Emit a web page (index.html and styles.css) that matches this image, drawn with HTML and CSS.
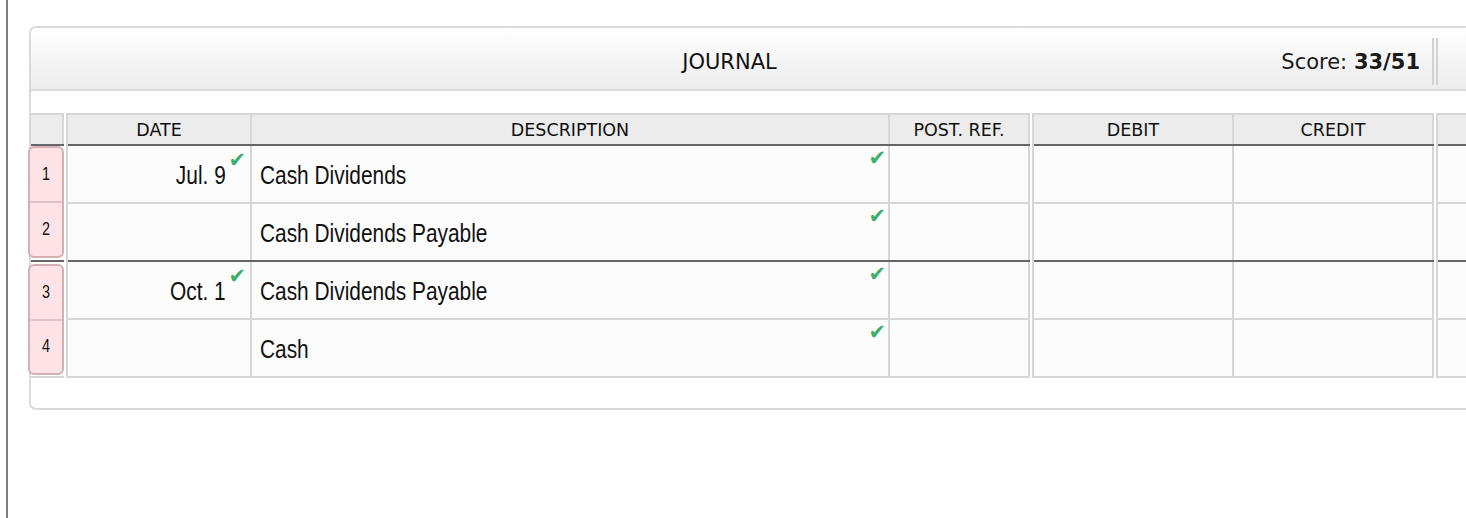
FILE: index.html
```html
<!DOCTYPE html>
<html>
<head>
<meta charset="utf-8">
<link rel="stylesheet" href="styles.css">
</head>
<body>
<div class="frame">
  <div class="panel">
    <div class="panel-head">
      <div class="head-main">
        <span class="title">JOURNAL</span>
        <span class="score">Score: <b>33/51</b></span>
      </div>
      <div class="dbl-sep"></div>
      <div class="head-extra"></div>
    </div>
    <div class="panel-body">
      <div class="grid">
        <div class="grp nums">
          <div class="hrow"><div class="hcell num-h"></div></div>
          <div class="entry dark">
            <div class="pink">
              <div class="pcell"><span class="n">1</span></div>
              <div class="pcell"><span class="n">2</span></div>
            </div>
          </div>
          <div class="entry">
            <div class="pink">
              <div class="pcell"><span class="n">3</span></div>
              <div class="pcell"><span class="n">4</span></div>
            </div>
          </div>
        </div>

        <div class="grp main">
          <div class="hrow">
            <div class="hcell c-date">DATE</div>
            <div class="hcell c-desc">DESCRIPTION</div>
            <div class="hcell c-ref">POST. REF.</div>
          </div>
          <div class="row">
            <div class="cell c-date date"><span class="t tr">Jul. 9</span><span class="chk dchk">✔</span></div>
            <div class="cell c-desc desc"><span class="t">Cash Dividends</span><span class="chk rchk">✔</span></div>
            <div class="cell c-ref"></div>
          </div>
          <div class="row dark">
            <div class="cell c-date date"></div>
            <div class="cell c-desc desc"><span class="t">Cash Dividends Payable</span><span class="chk rchk">✔</span></div>
            <div class="cell c-ref"></div>
          </div>
          <div class="row">
            <div class="cell c-date date"><span class="t tr">Oct. 1</span><span class="chk dchk">✔</span></div>
            <div class="cell c-desc desc"><span class="t">Cash Dividends Payable</span><span class="chk rchk">✔</span></div>
            <div class="cell c-ref"></div>
          </div>
          <div class="row">
            <div class="cell c-date date"></div>
            <div class="cell c-desc desc"><span class="t">Cash</span><span class="chk rchk">✔</span></div>
            <div class="cell c-ref"></div>
          </div>
        </div>

        <div class="grp amt">
          <div class="hrow">
            <div class="hcell c-amt">DEBIT</div>
            <div class="hcell c-amt">CREDIT</div>
          </div>
          <div class="row"><div class="cell c-amt"></div><div class="cell c-amt"></div></div>
          <div class="row dark"><div class="cell c-amt"></div><div class="cell c-amt"></div></div>
          <div class="row"><div class="cell c-amt"></div><div class="cell c-amt"></div></div>
          <div class="row"><div class="cell c-amt"></div><div class="cell c-amt"></div></div>
        </div>

        <div class="grp extra">
          <div class="hrow"><div class="hcell c-extra"></div></div>
          <div class="row"><div class="cell c-extra"></div></div>
          <div class="row dark"><div class="cell c-extra"></div></div>
          <div class="row"><div class="cell c-extra"></div></div>
          <div class="row"><div class="cell c-extra"></div></div>
        </div>
      </div>
    </div>
  </div>
</div>
</body>
</html>
```

FILE: styles.css
```css
* { box-sizing: border-box; }
html, body {
  margin: 0;
  padding: 0;
  background: #fff;
  overflow: hidden;
}
body {
  width: 1466px;
  height: 518px;
  padding-left: 6px;
  font-family: "DejaVu Sans", Verdana, sans-serif;
  color: #111;
}
.frame {
  height: 518px;
  border-left: 2px solid #7d7d7d;
  padding-top: 26px;
  padding-left: 21px;
}
.panel {
  width: 1560px;
  border: 2px solid #dadada;
  border-radius: 7px;
  background: #fff;
}
.panel-head {
  display: flex;
  align-items: center;
  height: 63px;
  border-bottom: 2px solid #dadada;
  border-radius: 5px 5px 0 0;
  background: linear-gradient(#ffffff, #ececec);
}
.head-main {
  width: 1401px;
  display: grid;
  grid-template-columns: 1fr auto 1fr;
  align-items: center;
  padding-right: 12px;
  padding-top: 6px;
}
.title {
  grid-column: 2;
  font-size: 21px;
  color: #111;
  padding-left: 8px;
}
.score {
  grid-column: 3;
  justify-self: end;
  font-size: 21px;
  color: #1a1a1a;
}
.score b { font-weight: bold; }
.dbl-sep {
  width: 6px;
  height: 47px;
  border-left: 2px solid #d2d2d2;
  border-right: 2px solid #d2d2d2;
  margin-top: 6px;
}
.head-extra { flex: 1; }

.panel-body {
  padding: 22px 0 30px 0;
}
.grid {
  display: flex;
  gap: 2px;
  align-items: flex-start;
}
.grp {
  border-top: 2px solid #d6d6d6;
  border-left: 2px solid #d6d6d6;
}
.grp.nums { border-left: 0; width: 33px; }
.hrow {
  display: flex;
  height: 31px;
  border-bottom: 2px solid #666;
}
.hcell {
  background: #ececec;
  border-right: 2px solid #d6d6d6;
  display: flex;
  align-items: center;
  justify-content: center;
  font-size: 17.5px;
  color: #111;
  padding-top: 1px;
}
.num-h { width: 33px; }
.row {
  display: flex;
  height: 58px;
  border-bottom: 2px solid #d6d6d6;
}
.row.dark { border-bottom-color: #666; }
.cell {
  position: relative;
  background: #fcfcfc;
  border-right: 2px solid #d6d6d6;
  display: flex;
  align-items: center;
  font-family: "Liberation Sans", Arial, sans-serif;
  font-size: 25px;
  color: #111;
}
.t {
  display: inline-block;
  white-space: nowrap;
  transform: scaleX(0.835);
  transform-origin: left center;
}
.t.tr { transform-origin: right center; }
.c-date { width: 184px; }
.c-desc { width: 638px; }
.c-ref { width: 140px; }
.c-amt { width: 200px; }
.c-extra { width: 120px; }
.date {
  justify-content: flex-end;
  padding-right: 24px;
  padding-top: 2px;
}
.desc {
  padding-left: 8px;
  padding-top: 2px;
}
.chk {
  position: absolute;
  font-family: "DejaVu Sans", sans-serif;
  font-size: 21px;
  line-height: 1;
  color: #3daf6b;
}
.rchk { top: 2px; right: 2px; }
.dchk { top: 4px; right: 4px; }

.entry {
  height: 116px;
  border-bottom: 2px solid #d6d6d6;
  padding: 0 0 1px 0;
}
.entry.dark { border-bottom-color: #666; padding-bottom: 2px; }
.entry + .entry { padding-top: 2px; }
.pink {
  height: 100%;
  margin-left: -3px;
  background: #fde3e6;
  border: 2px solid #d3b0b4;
  border-radius: 6px;
  display: flex;
  flex-direction: column;
}
.pcell {
  flex: 1;
  display: flex;
  align-items: center;
  justify-content: center;
  font-family: "Liberation Sans", Arial, sans-serif;
  font-size: 18px;
  color: #111;
}
.n {
  display: inline-block;
  transform: scaleX(0.8);
}
.pcell + .pcell { border-top: 2px solid #e3c3c6; }
```
